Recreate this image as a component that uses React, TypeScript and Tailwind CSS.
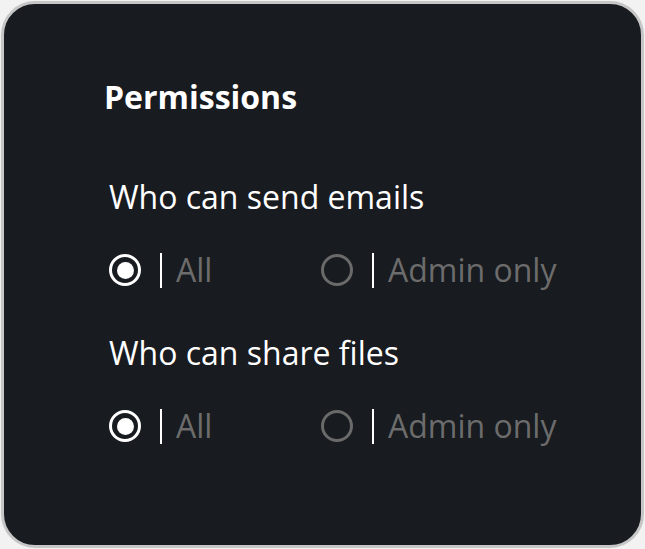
import React from "react";

type Option = { label: string; checked: boolean };

const Radio: React.FC<Option> = ({ label, checked }) => (
  <div className="flex items-center w-[212px] shrink-0 whitespace-nowrap">
    <span
      className={
        checked
          ? "flex shrink-0 items-center justify-center w-[32px] h-[32px] rounded-full border-[3px] border-white"
          : "flex shrink-0 items-center justify-center w-[32px] h-[32px] rounded-full border-[3px] border-[#6a6a6a]"
      }
    >
      {checked && <span className="w-[17px] h-[17px] rounded-full bg-white"></span>}
    </span>
    <span className="ml-[19px] shrink-0 w-[2px] h-[35px] bg-white"></span>
    <span className="ml-[14px] text-[32px] leading-none text-[#6c6c6c]">{label}</span>
  </div>
);

const Group: React.FC<{ title: string }> = ({ title }) => (
  <div className="pl-[5px]">
    <div className="text-[32px] leading-[40px] text-white whitespace-nowrap">{title}</div>
    <div className="flex items-center mt-[33px] h-[40px]">
      <Radio label="All" checked />
      <Radio label="Admin only" checked={false} />
    </div>
  </div>
);

const App: React.FC = () => (
  <div className="w-[645px] h-[549px] bg-[#f2f2f2] p-[1px] font-['Open_Sans',sans-serif]">
    <div className="w-full h-full rounded-[34px] border-[3px] border-[#c6c6c6] bg-[#181b1f] pl-[100px] pt-[73px]">
      <h1 className="text-[32px] leading-[40px] font-bold text-white">Permissions</h1>
      <div className="mt-[60px] flex flex-col gap-[43px]">
        <Group title="Who can send emails" />
        <Group title="Who can share files" />
      </div>
    </div>
  </div>
);

export default App;
